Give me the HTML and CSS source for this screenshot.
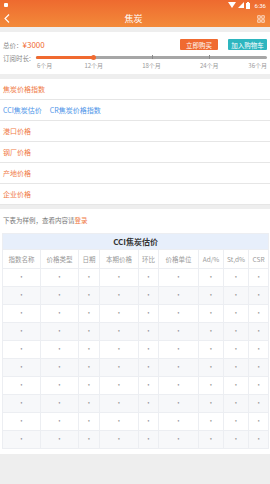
FILE: index.html
```html
<!DOCTYPE html>
<html lang="zh">
<head>
  <meta charset="UTF-8" />
  <meta name="viewport" content="width=device-width, initial-scale=1.0" />
  <title>焦炭</title>
  <link rel="stylesheet" href="styles.css">
</head>
<body>
  <header class="topbar">
    <div class="status">
      <span class="status-app"></span>
      <div class="status-right">
        <svg width="8" height="6" viewBox="0 0 8 6"><polygon points="0,0 8,0 4,6" fill="#fff"/></svg>
        <svg width="6" height="6" viewBox="0 0 6 6"><polygon points="6,0 6,6 0,6" fill="#fff"/></svg>
        <svg width="4" height="7" viewBox="0 0 4 7"><rect x="0" y="1" width="4" height="6" fill="#fff"/><rect x="1" y="0" width="2" height="1" fill="#fff"/></svg>
        <span class="clock">6:36</span>
      </div>
    </div>
    <div class="navbar">
      <svg class="back" width="6" height="9" viewBox="0 0 6 9"><polyline points="5,0.5 1,4.5 5,8.5" fill="none" stroke="#fff" stroke-width="1.1"/></svg>
      <h1>焦炭</h1>
      <svg class="grid" width="8" height="8" viewBox="0 0 8 8">
        <rect x="0.8" y="0.8" width="2.4" height="2.4" fill="none" stroke="#fff" stroke-width="0.7"/>
        <rect x="4.8" y="0.8" width="2.4" height="2.4" fill="none" stroke="#fff" stroke-width="0.7"/>
        <rect x="0.8" y="4.8" width="2.4" height="2.4" fill="none" stroke="#fff" stroke-width="0.7"/>
        <rect x="4.8" y="4.8" width="2.4" height="2.4" fill="none" stroke="#fff" stroke-width="0.7"/>
      </svg>
    </div>
  </header>

  <section class="buy">
    <div class="buy-row">
      <span class="label">总价：</span>
      <span class="price">¥3000</span>
      <button class="btn btn-buy">立即购买</button>
      <button class="btn btn-cart">加入购物车</button>
    </div>
    <div class="term">
      <span class="label term-label">订阅时长:</span>
      <div class="scale">
        <div class="track">
          <div class="fill"></div>
          <span class="tick t18"></span>
          <span class="tick t24"></span>
          <span class="knob"></span>
        </div>
        <div class="marks">
          <span class="mark m6">6个月</span>
          <span class="mark m12">12个月</span>
          <span class="mark m18">18个月</span>
          <span class="mark m24">24个月</span>
          <span class="mark m36">36个月</span>
        </div>
      </div>
    </div>
  </section>

  <ul class="menu">
    <li class="menu-item orange">焦炭价格指数</li>
    <li class="menu-item blue"><a>CCI焦炭估价</a><a>CR焦炭价格指数</a></li>
    <li class="menu-item orange">港口价格</li>
    <li class="menu-item orange">钢厂价格</li>
    <li class="menu-item orange">产地价格</li>
    <li class="menu-item orange">企业价格</li>
  </ul>

  <section class="sample">
    <p class="notice">下表为样例，查看内容请<a>登录</a></p>
    <table class="price-table">
      <colgroup>
        <col class="c1"><col class="c2"><col class="c3"><col class="c4"><col class="c5">
        <col class="c6"><col class="c7"><col class="c8"><col class="c9">
      </colgroup>
      <thead>
        <tr><th colspan="9" class="caption">CCI焦炭估价</th></tr>
        <tr class="cols">
          <th>指数名称</th><th>价格类型</th><th>日期</th><th>本期价格</th><th>环比</th>
          <th>价格单位</th><th>Ad/%</th><th>St,d%</th><th>CSR</th>
        </tr>
      </thead>
      <tbody id="rows"></tbody>
    </table>
  </section>

  <script>
    const tbody = document.getElementById('rows');
    for (let i = 0; i < 10; i++) {
      const tr = document.createElement('tr');
      for (let j = 0; j < 9; j++) {
        const td = document.createElement('td');
        td.textContent = '*';
        tr.appendChild(td);
      }
      tbody.appendChild(tr);
    }
  </script>
</body>
</html>
```

FILE: styles.css
```css
body {
  font-family: "Noto Sans CJK SC", "Noto Sans", sans-serif;
  margin: 0;
  padding: 0;
  background: #eeeeee;
  color: #333;
  width: 270px;
  overflow: hidden;
}
.topbar {
  background: linear-gradient(#ee6a2f, #f38a3a);
  color: white;
  height: 27px;
}
.status {
  height: 10px;
  display: flex;
  align-items: center;
  justify-content: space-between;
  padding: 0 4px;
}
.status-app {
  width: 4px;
  height: 4px;
  background: #fff;
  border-radius: 1px;
}
.status-right {
  display: flex;
  align-items: center;
  gap: 2px;
}
.clock {
  font-family: "Roboto", sans-serif;
  font-size: 6px;
  margin-left: 2px;
}
.navbar {
  height: 17px;
  display: flex;
  align-items: center;
  justify-content: space-between;
  padding: 0 5px 0 4px;
}
.navbar h1 {
  margin: 0;
  font-size: 9px;
  font-weight: normal;
}
.buy {
  background: #fff;
  margin-top: 5px;
  padding: 7px 3px 5px 3px;
}
.buy-row {
  display: flex;
  align-items: center;
  height: 11px;
}
.label {
  font-size: 6.5px;
  color: #888;
}
.price {
  font-size: 8px;
  color: #f06a30;
  flex: 1;
}
.btn {
  border: none;
  color: #fff;
  font-family: inherit;
  font-size: 6.5px;
  height: 11px;
  padding: 0;
  border-radius: 1px;
}
.btn-buy {
  background: #f06a30;
  width: 38px;
}
.btn-cart {
  background: #2db6bf;
  width: 39px;
  margin-left: 10px;
}
.term {
  display: flex;
  margin-top: 6px;
}
.term-label {
  width: 33px;
  line-height: 5px;
}
.scale {
  flex: 1;
}
.track {
  position: relative;
  height: 3px;
  background: #a6a6a6;
  border-radius: 2px;
}
.fill {
  width: 25%;
  height: 100%;
  background: #f06a30;
  border-radius: 2px;
}
.tick {
  position: absolute;
  top: -1px;
  width: 1px;
  height: 4px;
  background: #888;
}
.t18 { left: 50%; }
.t24 { left: 75%; }
.knob {
  position: absolute;
  left: 25%;
  top: -1.5px;
  width: 5px;
  height: 5px;
  margin-left: -2.5px;
  border-radius: 50%;
  background: #f06a30;
}
.marks {
  position: relative;
  height: 10px;
  font-size: 6px;
  color: #999;
}
.mark {
  position: absolute;
  top: 2px;
  transform: translateX(-50%);
}
.m6 { left: 0; transform: none; margin-left: 1px; }
.m12 { left: 25%; }
.m18 { left: 50%; }
.m24 { left: 75%; }
.m36 { left: auto; right: 0; transform: none; }
.menu {
  list-style: none;
  margin: 5px 0 0 0;
  padding: 0;
  background: #fff;
}
.menu-item {
  height: 20px;
  line-height: 20px;
  font-size: 7px;
  padding-left: 3px;
  border-bottom: 1px solid #e6e6e6;
}
.orange {
  color: #f07a45;
}
.blue a {
  color: #4d94e8;
  margin-right: 8px;
}
.sample {
  background: #fff;
  margin-top: 4px;
  padding: 5px 2px 5px 2px;
}
.notice {
  margin: 0 0 0 1px;
  font-size: 6.5px;
  color: #777;
  height: 19px;
  line-height: 12px;
}
.notice a {
  color: #f07a45;
}
.price-table {
  width: 266px;
  border-collapse: collapse;
  table-layout: fixed;
  font-size: 6px;
  color: #999;
}
.c1 { width: 38px; }
.c2 { width: 38px; }
.c3 { width: 21px; }
.c4 { width: 39px; }
.c5 { width: 20px; }
.c6 { width: 40px; }
.c7 { width: 25px; }
.c8 { width: 25px; }
.c9 { width: 20px; }
.price-table th,
.price-table td {
  border: 1px solid #eceef2;
  text-align: center;
  font-weight: normal;
  padding: 0;
  white-space: nowrap;
  overflow: hidden;
}
.price-table .caption {
  background: #e7effb;
  color: #333;
  font-size: 8px;
  font-weight: bold;
  height: 15px;
}
.cols th {
  height: 18px;
  font-size: 6.5px;
}
.price-table td {
  height: 17px;
  font-size: 5px;
  color: #777;
}
.price-table tbody tr:nth-child(even) {
  background: #f7f8fa;
}
```
